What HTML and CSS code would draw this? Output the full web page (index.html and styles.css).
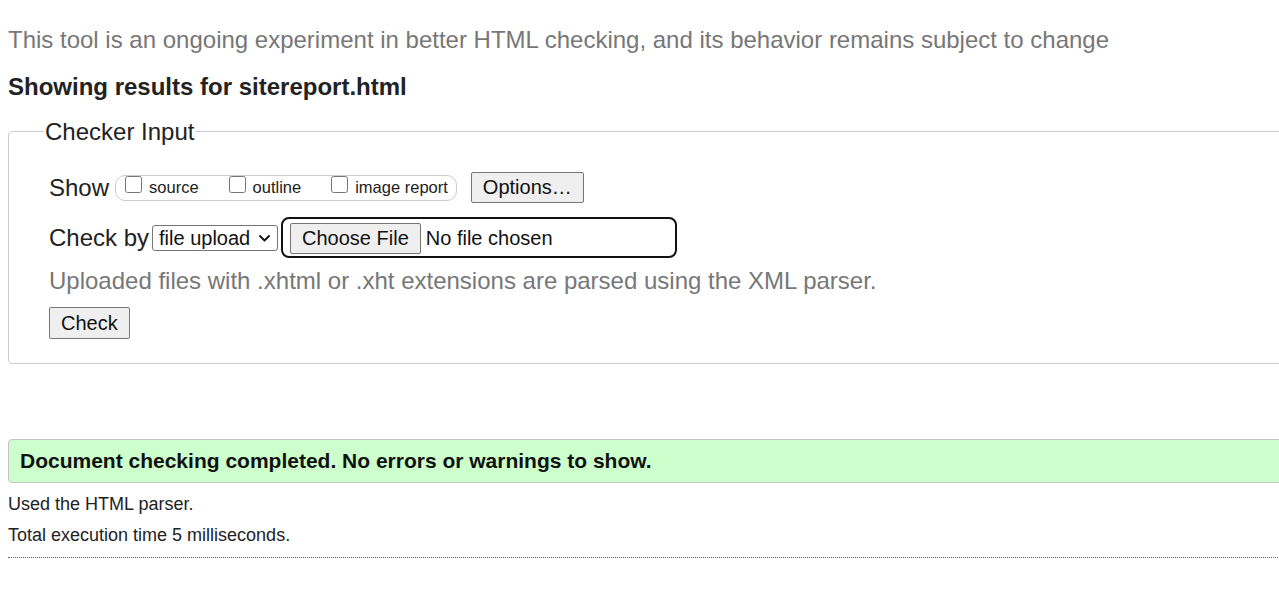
FILE: index.html
```html
<!DOCTYPE html>
<html lang="en">
<head>
<meta charset="utf-8">
<title>Nu Html Checker</title>
<link rel="stylesheet" href="styles.css">
</head>
<body>
<div class="page">
  <p class="intro">This tool is an ongoing experiment in better HTML checking, and its behavior remains subject to change</p>
  <h2 class="results-title">Showing results for sitereport.html</h2>
  <form class="checker-form">
    <fieldset class="checker-input">
      <legend class="legend">Checker Input</legend>
      <div class="row show-row">
        <span class="row-label">Show</span>
        <span class="show-group">
          <label class="opt"><input type="checkbox" class="cb"> source</label>
          <label class="opt"><input type="checkbox" class="cb"> outline</label>
          <label class="opt"><input type="checkbox" class="cb"> image report</label>
        </span>
        <button type="button" class="btn options-btn">Options…</button>
      </div>
      <div class="row checkby-row">
        <span class="row-label">Check by</span>
        <span class="select-wrap">
          <select class="select"><option>file upload</option></select>
          <svg class="chev" width="11" height="7" viewBox="0 0 11 7" aria-hidden="true"><path d="M1 1 L5.5 5.5 L10 1" fill="none" stroke="#111" stroke-width="1.8" stroke-linecap="round" stroke-linejoin="round"/></svg>
        </span>
        <input type="file" class="file-input">
      </div>
      <p class="help">Uploaded files with .xhtml or .xht extensions are parsed using the XML parser.</p>
      <button type="button" class="btn check-btn">Check</button>
    </fieldset>
  </form>
  <div class="success">Document checking completed. No errors or warnings to show.</div>
  <p class="details">Used the HTML parser.</p>
  <p class="details">Total execution time 5 milliseconds.</p>
  <hr class="rule">
</div>
</body>
</html>
```
FILE: styles.css
```css
html {
  overflow: hidden;
}
body {
  margin: 0;
  padding: 0 8px;
  width: 1400px;
  font-family: "Liberation Sans", Arial, sans-serif;
  color: #222;
  background: #fff;
}
.intro {
  margin: 27px 0 0;
  font-size: 24px;
  line-height: 26px;
  color: #777;
}
.results-title {
  margin: 21px 0 0;
  font-size: 24px;
  line-height: 26px;
  font-weight: bold;
  color: #222;
}
.checker-form {
  margin: 19px 0 0;
}
.checker-input {
  margin: 0;
  padding: 0 40px 24px;
  border: 1px solid #ccc;
  border-radius: 4px;
}
.legend {
  font-size: 24px;
  line-height: 25px;
  padding: 0 1px;
  margin-left: -5px;
  color: #222;
}
.row {
  display: flex;
  align-items: center;
}
.show-row {
  margin-top: 28px;
}
.row-label {
  font-size: 24px;
  line-height: 28px;
  color: #222;
}
.show-group {
  display: inline-flex;
  align-items: center;
  margin-left: 6px;
  padding: 0 8px 0 9px;
  height: 24px;
  border: 1px solid #ccc;
  border-radius: 10px;
  gap: 30px;
}
.opt {
  display: inline-flex;
  align-items: center;
  font-size: 16.5px;
  color: #222;
  gap: 7px;
}
.cb {
  width: 17px;
  height: 17px;
  margin: -6px 0 0 0;
}
.btn {
  font-family: "Liberation Sans", Arial, sans-serif;
  font-size: 20px;
  color: #111;
  background: #efefef;
  border: 1px solid #767676;
  border-radius: 2px;
  padding: 2px 11px;
}
.options-btn {
  margin-left: 14px;
  height: 31px;
}
.checkby-row {
  margin-top: 14px;
}
.select-wrap {
  position: relative;
  display: inline-flex;
  margin-left: 3px;
}
.select {
  appearance: none;
  -webkit-appearance: none;
  width: 126px;
  font-family: "Liberation Sans", Arial, sans-serif;
  font-size: 20px;
  height: 26px;
  padding: 0 20px 0 6px;
  border: 1px solid #767676;
  border-radius: 3px;
  color: #111;
  background: #fff;
}
.chev {
  position: absolute;
  right: 8px;
  top: 10px;
  pointer-events: none;
}
.file-input {
  margin-left: 3px;
  width: 396px;
  height: 41px;
  box-sizing: border-box;
  border: 2px solid #111;
  border-radius: 8px;
  padding: 4px 7px;
  font-family: "Liberation Sans", Arial, sans-serif;
  font-size: 20px;
  color: #111;
}
.file-input::file-selector-button {
  font-family: "Liberation Sans", Arial, sans-serif;
  font-size: 20px;
  color: #111;
  background: #efefef;
  border: 1px solid #767676;
  border-radius: 2px;
  padding: 2px 11px;
  margin-right: 5px;
  height: 31px;
}
.help {
  margin: 9px 0 0;
  font-size: 24px;
  line-height: 28px;
  color: #777;
}
.check-btn {
  margin-top: 12px;
  height: 32px;
  padding: 2px 11px;
}
.success {
  margin-top: 75px;
  padding: 10px 11px;
  font-size: 21px;
  line-height: 22px;
  font-weight: bold;
  color: #111;
  background: #ccffcc;
  border: 1px solid #c4c4c4;
  border-radius: 4px;
}
.details {
  margin: 11px 0 0;
  font-size: 18px;
  line-height: 20px;
  color: #222;
}
.details + .details {
  margin-top: 11px;
}
.rule {
  margin: 12px 0 0;
  border: 0;
  border-top: 1px dotted #666;
}
```
